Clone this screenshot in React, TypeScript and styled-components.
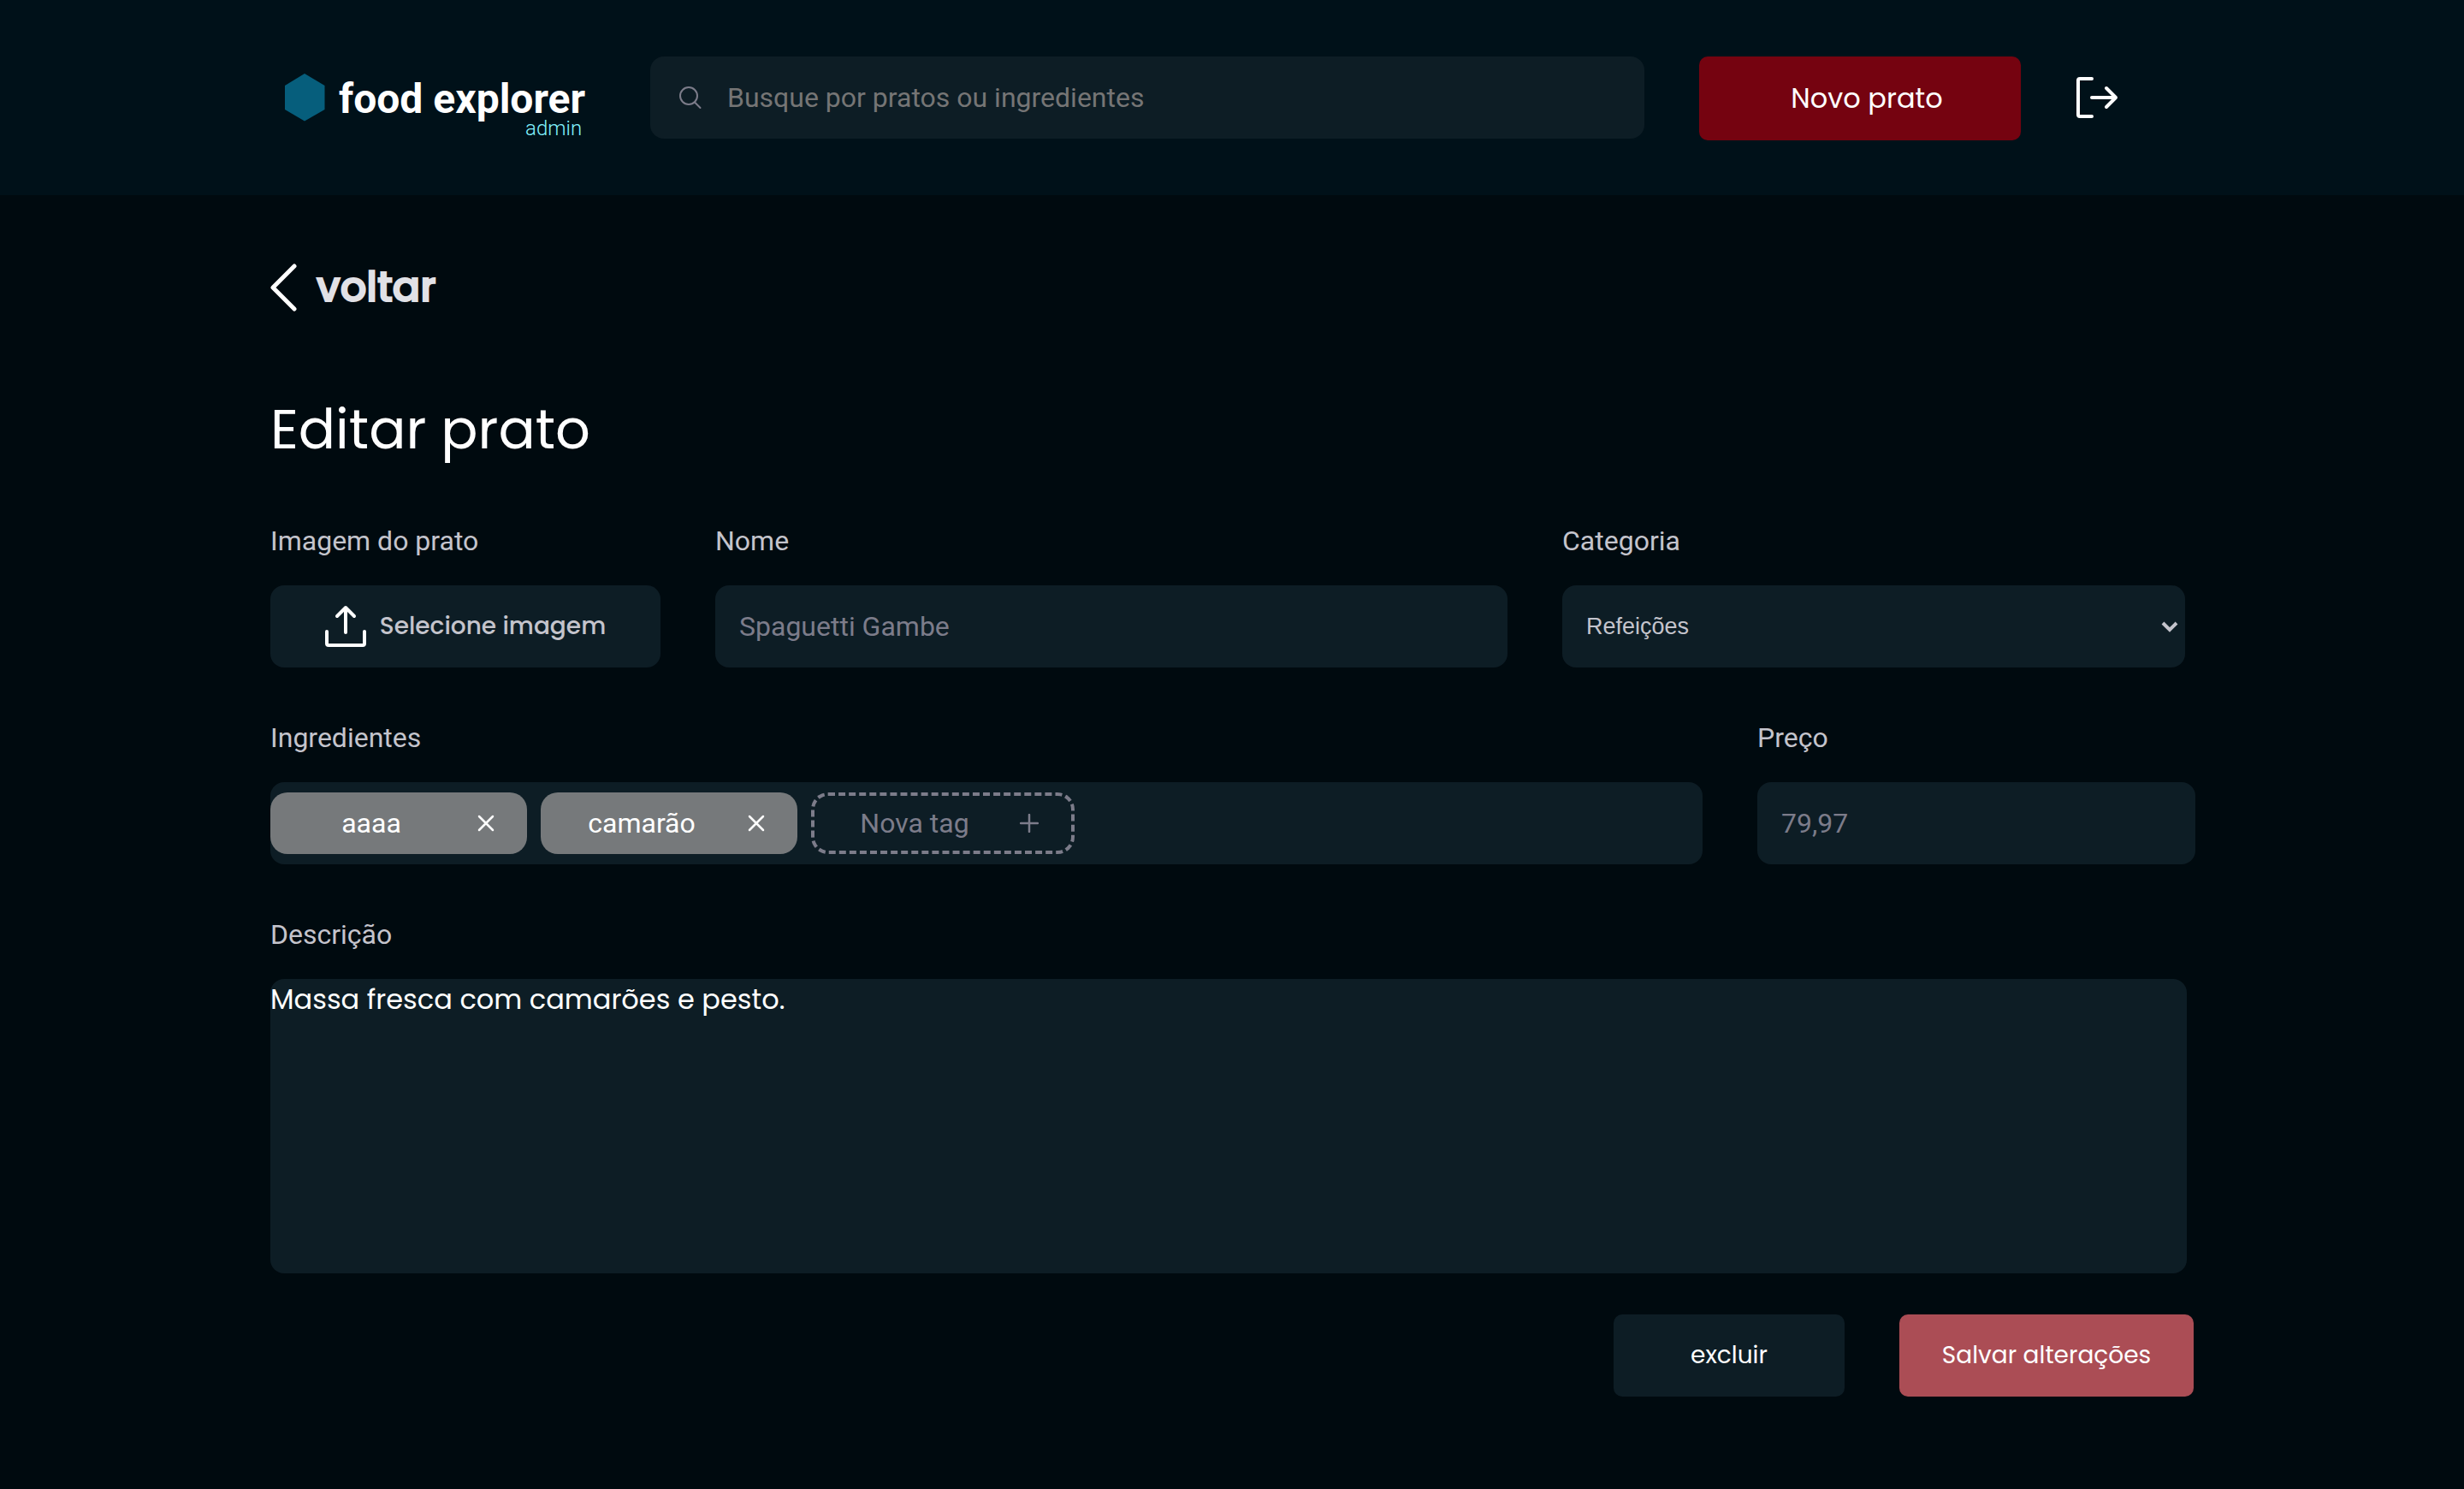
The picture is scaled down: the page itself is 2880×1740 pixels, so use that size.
import { useState } from "react";
import styled, { createGlobalStyle, css } from "styled-components";

const roboto = `Roboto, "Liberation Sans", sans-serif`;
const poppins = `Poppins, Inter, sans-serif`;

const GlobalStyle = createGlobalStyle`
  * { margin: 0; padding: 0; box-sizing: border-box; }
  body {
    background: #000a0f;
    color: #ffffff;
    font-family: ${roboto};
    font-size: 32px;
    line-height: 40px;
  }
  button { border: none; cursor: pointer; color: inherit; }
  input, select, textarea { border: none; outline: none; }
`;

const surface = css`
  background: #0d1d25;
  border-radius: 16px;
`;

const Header = styled.header`
  display: flex;
  align-items: flex-start;
  gap: 64px;
  height: 228px;
  padding: 66px 404px 0 332px;
  background: #001119;
`;

const Brand = styled.a`
  display: flex;
  align-items: flex-start;
  gap: 16px;
  width: 364px;
  padding-top: 20px;
  color: inherit;
  text-decoration: none;
`;

const BrandText = styled.span`
  display: grid;
  justify-items: end;
  padding-top: 4px;
`;

const BrandName = styled.strong`
  font-size: 48px;
  font-weight: 700;
  line-height: 52px;
  white-space: nowrap;
`;

const BrandRole = styled.small`
  padding-right: 4px;
  color: #82f3ff;
  font-size: 24px;
  font-weight: 300;
  line-height: 16px;
`;

const Search = styled.label`
  ${surface}
  flex: 1;
  display: flex;
  align-items: center;
  gap: 30px;
  height: 96px;
  padding: 0 32px;
`;

const SearchInput = styled.input`
  flex: 1;
  min-width: 0;
  background: transparent;
  color: #ffffff;
  font: 400 32px/40px ${roboto};
  &::placeholder { color: #757575; opacity: 1; }
`;

const NewDish = styled.button`
  width: 376px;
  height: 98px;
  padding-left: 16px;
  border-radius: 10px;
  background: #750310;
  font: 400 32px/40px ${poppins};
`;

const IconButton = styled.button`
  display: inline-flex;
  align-items: center;
  justify-content: center;
  padding: 0 2px;
  background: transparent;
`;

const Logout = styled(IconButton)`
  height: 96px;
  padding: 0;
`;

const Main = styled.main`
  padding: 72px 314px 100px 316px;
`;

const Back = styled.button`
  display: flex;
  align-items: center;
  gap: 22px;
  height: 72px;
  background: transparent;
  color: #e1e1e6;
  font: 500 48px/72px ${poppins};
  -webkit-text-stroke: 2px #e1e1e6;
`;

const Title = styled.h1`
  margin-top: 80px;
  font: 400 64px/100px ${poppins};
`;

const Form = styled.form`
  display: grid;
  gap: 62px;
  margin-top: 60px;
`;

const Row = styled.div<{ $columns: string; $inset?: number }>`
  display: grid;
  grid-template-columns: ${(p) => p.$columns};
  gap: 64px;
  padding-right: ${(p) => p.$inset ?? 0}px;
`;

const Field = styled.div`
  display: grid;
  gap: 32px;
  align-content: start;
  min-width: 0;
`;

const labelText = css`
  color: #c4c4cc;
  font-size: 32px;
  line-height: 40px;
`;

const Label = styled.label`
  ${labelText}
`;

const Caption = styled.span`
  ${labelText}
`;

const TextInput = styled.input`
  ${surface}
  width: 100%;
  height: 96px;
  padding: 0 28px;
  color: #ffffff;
  font: 400 32px/40px ${roboto};
  &::placeholder { color: #7c7c8a; opacity: 1; }
`;

const UploadButton = styled.button`
  ${surface}
  display: flex;
  align-items: center;
  justify-content: center;
  gap: 16px;
  height: 96px;
  color: #c4c4cc;
  font: 500 28px/40px ${poppins};
`;

const SelectBox = styled.div`
  ${surface}
  display: grid;
  align-items: center;
  grid-template-columns: 1fr 28px;
`;

const Select = styled.select`
  grid-area: 1 / 1 / 2 / 3;
  width: 100%;
  height: 96px;
  padding: 0 28px;
  appearance: none;
  background: transparent;
  color: #c4c4cc;
  font: 400 27px/40px "Liberation Sans", Arial, sans-serif;
`;

const SelectArrow = styled.svg`
  grid-area: 1 / 2;
  pointer-events: none;
`;

const Tags = styled.div`
  ${surface}
  display: flex;
  align-items: center;
  gap: 16px;
  height: 96px;
`;

const Tag = styled.div<{ $draft?: boolean }>`
  display: flex;
  align-items: center;
  gap: 4px;
  width: ${(p) => (p.$draft ? 308 : 300)}px;
  height: 72px;
  padding-right: 36px;
  border: ${(p) => (p.$draft ? "4px dashed #7c7c8a" : "none")};
  border-radius: 20px;
  background: ${(p) => (p.$draft ? "transparent" : "#76797b")};
  color: ${(p) => (p.$draft ? "#7c7c8a" : "#ffffff")};
`;

const TagInput = styled.input`
  flex: 1;
  min-width: 0;
  background: transparent;
  color: inherit;
  text-align: center;
  font: 400 32px/40px ${roboto};
  &::placeholder { color: #7c7c8a; opacity: 1; }
`;

const Description = styled.textarea`
  ${surface}
  display: block;
  width: 100%;
  height: 344px;
  resize: none;
  color: #ffffff;
  font: 400 32px/48px ${poppins};
`;

const Actions = styled.div`
  display: flex;
  justify-content: flex-end;
  gap: 64px;
  margin-top: -14px;
  padding-right: 2px;
`;

const Action = styled.button<{ $primary?: boolean }>`
  width: ${(p) => (p.$primary ? 344 : 270)}px;
  height: 96px;
  border-radius: 10px;
  background: ${(p) => (p.$primary ? "#ab4d55" : "#0d1d25")};
  font: 400 28px/40px ${poppins};
`;

const CloseIcon = () => (
  <svg width="20" height="20" viewBox="0 0 20 20" fill="none" stroke="currentColor" strokeWidth="2.5" strokeLinecap="round">
    <path d="M2 2 18 18M18 2 2 18" />
  </svg>
);

const PlusIcon = () => (
  <svg width="22" height="22" viewBox="0 0 22 22" fill="none" stroke="currentColor" strokeWidth="2.5" strokeLinecap="round">
    <path d="M11 1V21M1 11H21" />
  </svg>
);

export default function App() {
  const [tags, setTags] = useState(["aaaa", "camarão"]);

  return (
    <>
      <GlobalStyle />
      <Header>
        <Brand href="#">
          <svg width="48" height="56" viewBox="0 0 48 56">
            <path d="M24 0 47.5 14V42L24 55.5 1 42V14Z" fill="#065e7c" />
          </svg>
          <BrandText>
            <BrandName>food explorer</BrandName>
            <BrandRole>admin</BrandRole>
          </BrandText>
        </Brand>
        <Search>
          <svg width="28" height="28" viewBox="0 0 28 28" fill="none" stroke="#7c7c8a" strokeWidth="2" strokeLinecap="round">
            <circle cx="13" cy="12" r="10" />
            <path d="M20 19.5 26.5 26" />
          </svg>
          <SearchInput aria-label="Busca" placeholder="Busque por pratos ou ingredientes" />
        </Search>
        <NewDish>Novo prato</NewDish>
        <Logout aria-label="Sair">
          <svg width="50" height="50" viewBox="0 0 50 50" fill="none" stroke="#fff" strokeWidth="4" strokeLinecap="round" strokeLinejoin="round">
            <path d="M19 3H5Q3 3 3 5V45Q3 47 5 47H19M19 25H47M36 14 47 25 36 36" />
          </svg>
        </Logout>
      </Header>

      <Main>
        <Back>
          <svg width="32" height="56" viewBox="0 0 32 56" fill="none" stroke="#fff" strokeWidth="5" strokeLinecap="round" strokeLinejoin="round">
            <path d="M28 3 3 28 28 53" />
          </svg>
          voltar
        </Back>
        <Title>Editar prato</Title>

        <Form onSubmit={(e) => e.preventDefault()}>
          <Row $columns="456fr 926fr 728fr" $inset={12}>
            <Field>
              <Caption id="image-label">Imagem do prato</Caption>
              <UploadButton type="button" aria-describedby="image-label">
                <svg width="48" height="50" viewBox="0 0 48 50" fill="none" stroke="#fff" strokeWidth="4" strokeLinecap="round" strokeLinejoin="round">
                  <path d="M2 31V45Q2 47 4 47H44Q46 47 46 45V31M24 32V3M14 13 24 3 34 13" />
                </svg>
                Selecione imagem
              </UploadButton>
            </Field>
            <Field>
              <Label htmlFor="name">Nome</Label>
              <TextInput id="name" placeholder="Spaguetti Gambe" />
            </Field>
            <Field>
              <Label htmlFor="category">Categoria</Label>
              <SelectBox>
                <Select id="category" defaultValue="Refeições">
                  <option>Refeições</option>
                  <option>Sobremesas</option>
                  <option>Bebidas</option>
                </Select>
                <SelectArrow width="20" height="14" viewBox="0 0 20 14" fill="none" stroke="#c4c4cc" strokeWidth="4">
                  <path d="M2 3 10 11 18 3" />
                </SelectArrow>
              </SelectBox>
            </Field>
          </Row>

          <Row $columns="1674fr 512fr">
            <Field>
              <Caption>Ingredientes</Caption>
              <Tags>
                {tags.map((tag) => (
                  <Tag key={tag}>
                    <TagInput aria-label="Ingrediente" value={tag} readOnly />
                    <IconButton type="button" aria-label={`Remover ${tag}`} onClick={() => setTags(tags.filter((t) => t !== tag))}>
                      <CloseIcon />
                    </IconButton>
                  </Tag>
                ))}
                <Tag $draft>
                  <TagInput aria-label="Nova tag" placeholder="Nova tag" />
                  <IconButton type="button" aria-label="Adicionar">
                    <PlusIcon />
                  </IconButton>
                </Tag>
              </Tags>
            </Field>
            <Field>
              <Label htmlFor="price">Preço</Label>
              <TextInput id="price" placeholder="79,97" />
            </Field>
          </Row>

          <Row $columns="1fr" $inset={10}>
            <Field>
              <Label htmlFor="description">Descrição</Label>
              <Description id="description" defaultValue="Massa fresca com camarões e pesto." />
            </Field>
          </Row>

          <Actions>
            <Action type="button">excluir</Action>
            <Action type="submit" $primary>Salvar alterações</Action>
          </Actions>
        </Form>
      </Main>
    </>
  );
}
